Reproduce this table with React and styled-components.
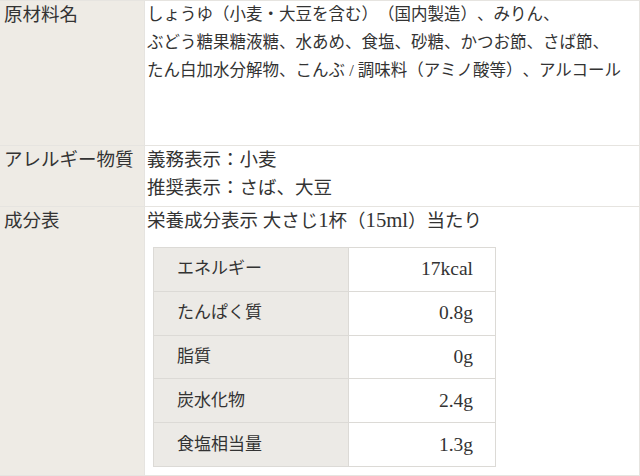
import React from "react";
import styled, { createGlobalStyle } from "styled-components";

const GlobalStyle = createGlobalStyle`
  html, body {
    margin: 0;
    padding: 0;
    background: #fff;
  }
  body {
    font-family: "Liberation Serif", "Noto Sans CJK JP", serif;
    color: #333;
    text-spacing-trim: space-all;
  }
`;

const SpecTable = styled.table`
  width: 640px;
  border-collapse: collapse;
  border-top: 1px solid #e6e4e0;
  border-right: 1px solid #e6e4e0;
`;

const Row = styled.tr`
  border-bottom: 1px solid #e6e4e0;
`;

const Label = styled.th`
  width: 140px;
  padding: 0 0 4px 4px;
  background: #eeebe5;
  border-right: 1px solid #e6e4e0;
  font-size: 18.5px;
  font-weight: normal;
  line-height: 28px;
  text-align: left;
  vertical-align: top;
  white-space: nowrap;
`;

const Value = styled.td`
  padding: 0 0 ${(p) => p.$bottom || 4}px 2px;
  font-size: ${(p) => p.$size || 18.5}px;
  line-height: 28px;
  vertical-align: top;
`;

const Latin = styled.span`
  font-size: 1.12em;
  line-height: 1;
`;

const Nutrition = styled.table`
  width: 343px;
  margin: 12px 0 4px 6px;
  border-collapse: collapse;
  border: 1px solid #dcdad6;
`;

const NutRow = styled.tr`
  border-bottom: 1px solid #dcdad6;
`;

const NutName = styled.td`
  width: 147px;
  height: 42.8px;
  padding: 0 24px 0 23px;
  background: #eceae6;
  border-right: 1px solid #dcdad6;
  font-size: 17px;
  line-height: 26px;
`;

const NutAmount = styled.td`
  padding: 0 22px;
  font-size: 19.5px;
  line-height: 26px;
  text-align: right;
`;

const nutrients = [
  ["エネルギー", "17kcal"],
  ["たんぱく質", "0.8g"],
  ["脂質", "0g"],
  ["炭水化物", "2.4g"],
  ["食塩相当量", "1.3g"],
];

export default function App() {
  return (
    <>
      <GlobalStyle />
      <SpecTable>
        <tbody>
          <Row>
            <Label>原材料名</Label>
            <Value $size={16.5} $bottom={60}>
              しょうゆ（小麦・大豆を含む）（国内製造）、みりん、
              <br />
              ぶどう糖果糖液糖、水あめ、食塩、砂糖、かつお節、さば節、
              <br />
              たん白加水分解物、こんぶ / 調味料（アミノ酸等）、アルコール
            </Value>
          </Row>
          <Row>
            <Label>アレルギー物質</Label>
            <Value>
              義務表示：小麦
              <br />
              推奨表示：さば、大豆
            </Value>
          </Row>
          <Row>
            <Label>成分表</Label>
            <Value>
              栄養成分表示 大さじ<Latin>1</Latin>杯（<Latin>15ml</Latin>）当たり
              <Nutrition>
                <tbody>
                  {nutrients.map(([name, amount]) => (
                    <NutRow key={name}>
                      <NutName>{name}</NutName>
                      <NutAmount>{amount}</NutAmount>
                    </NutRow>
                  ))}
                </tbody>
              </Nutrition>
            </Value>
          </Row>
        </tbody>
      </SpecTable>
    </>
  );
}
